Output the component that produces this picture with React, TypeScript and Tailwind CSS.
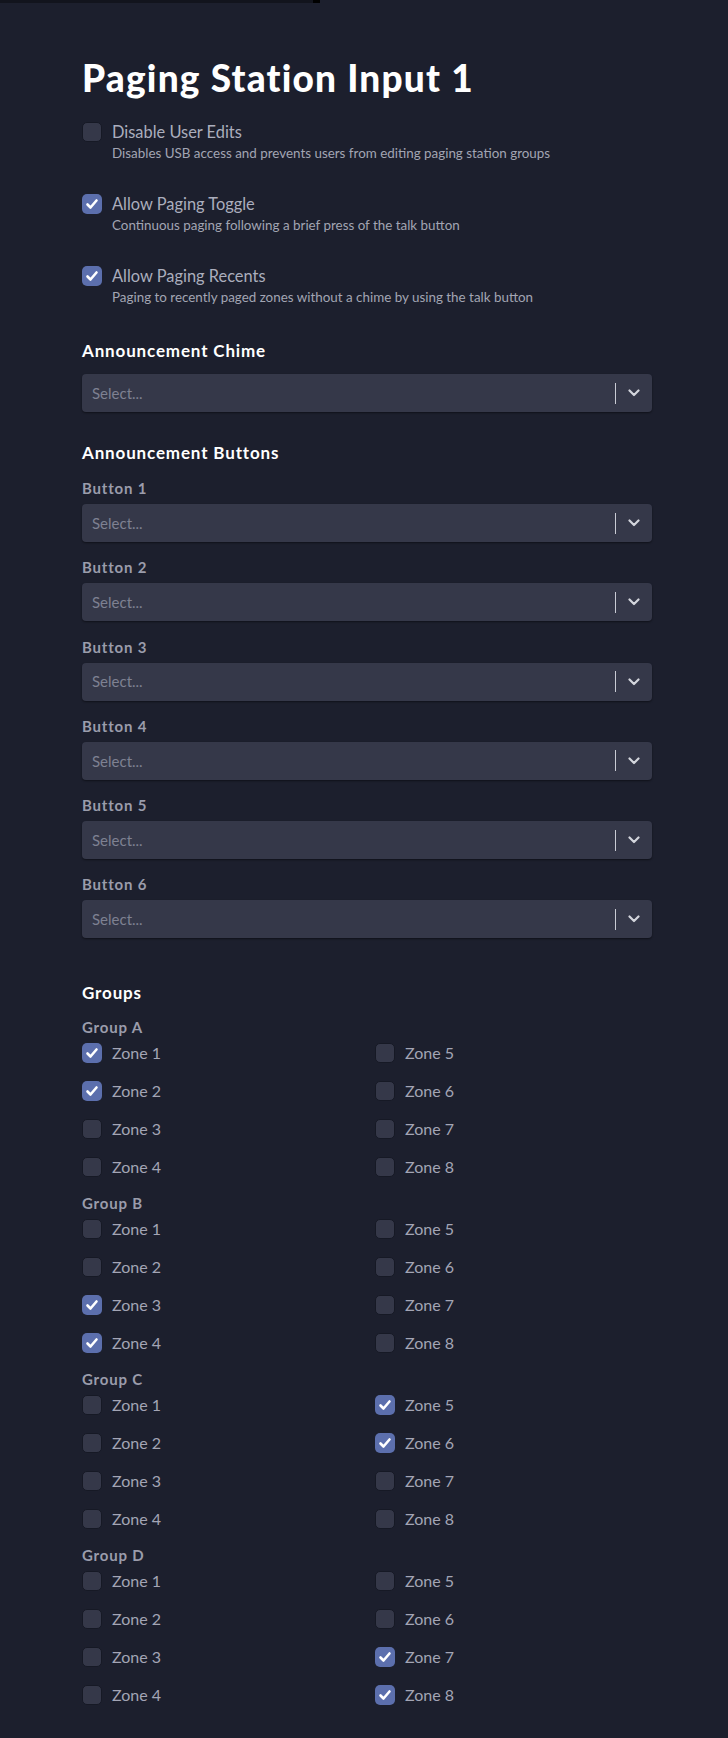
import React from "react";

const Check = () => (
  <svg viewBox="0 0 20 20" className="w-5 h-5">
    <path d="M5.5 10.5 L8.5 13.5 L14.5 6.5" stroke="white" strokeWidth="2.6" fill="none" strokeLinecap="round" strokeLinejoin="round" />
  </svg>
);

function Box({ checked }: { checked: boolean }) {
  return checked ? (
    <div className="w-5 h-5 shrink-0 rounded-[5px] bg-[#5c6fad] flex items-center justify-center">
      <Check />
    </div>
  ) : (
    <div className="w-5 h-5 shrink-0 rounded-[5px] bg-[#353849] border border-[#161925]" />
  );
}

function Select() {
  return (
    <div className="h-[38px] rounded-[4px] bg-[#353849] shadow-[0_1px_2px_rgba(0,0,0,0.45)] flex items-center">
      <div className="flex-1 pl-[10px] text-[15px] text-[#7e8192]">Select...</div>
      <div className="w-px h-[21px] bg-[#c9cbd4]" />
      <div className="w-9 h-full flex items-center justify-center">
        <svg viewBox="0 0 12 8" className="w-[12px] h-[8px]">
          <path d="M1.5 1.5 L6 6 L10.5 1.5" stroke="#d3d5dc" strokeWidth="2.2" fill="none" strokeLinecap="round" strokeLinejoin="round" />
        </svg>
      </div>
    </div>
  );
}

const options = [
  { label: "Disable User Edits", desc: "Disables USB access and prevents users from editing paging station groups", checked: false },
  { label: "Allow Paging Toggle", desc: "Continuous paging following a brief press of the talk button", checked: true },
  { label: "Allow Paging Recents", desc: "Paging to recently paged zones without a chime by using the talk button", checked: true },
];

const groups = [
  { name: "Group A", checked: [1, 2] },
  { name: "Group B", checked: [3, 4] },
  { name: "Group C", checked: [5, 6] },
  { name: "Group D", checked: [7, 8] },
];

export default function App() {
  return (
    <div className="min-h-screen bg-[#1c1f2d] font-['Lato',sans-serif]">
      <div className="flex">
        <div className="h-[3px] w-[313px] bg-[#12141d]" />
        <div className="h-[3px] w-[7px] bg-black" />
      </div>
      <div className="pl-[82px] w-[652px] pt-[53px] pb-[34px]">
        <h1 className="text-[37px] leading-[44px] font-black tracking-[1.2px] text-white">Paging Station Input 1</h1>

        <div className="mt-[22px] flex flex-col gap-[31px]">
          {options.map((o) => (
            <div key={o.label} className="flex gap-[10px]">
              <Box checked={o.checked} />
              <div>
                <div className="text-[16.4px] leading-[20px] text-[#abaebd]">{o.label}</div>
                <div className="mt-px text-[13.4px] leading-[20px] text-[#a2a5b3]">{o.desc}</div>
              </div>
            </div>
          ))}
        </div>

        <h2 className="mt-[32px] text-[17px] leading-[24px] font-bold tracking-[0.85px] text-white">Announcement Chime</h2>
        <div className="mt-[11px]">
          <Select />
        </div>

        <h2 className="mt-[29px] text-[17px] leading-[24px] font-bold tracking-[0.85px] text-white">Announcement Buttons</h2>
        <div className="mt-[13px] flex flex-col gap-[15.3px]">
          {[1, 2, 3, 4, 5, 6].map((n) => (
            <div key={n}>
              <div className="text-[15px] leading-[20px] font-bold tracking-[0.8px] text-[#9a9cab]">Button {n}</div>
              <div className="mt-[6px]">
                <Select />
              </div>
            </div>
          ))}
        </div>

        <h2 className="mt-[43px] text-[17px] leading-[24px] font-bold tracking-[0.85px] text-white">Groups</h2>
        <div className="mt-[12px] flex flex-col gap-[16px]">
          {groups.map((g) => (
            <div key={g.name}>
              <div className="text-[15px] leading-[20px] font-bold tracking-[0.8px] text-[#9a9cab]">{g.name}</div>
              <div className="mt-[6px] grid grid-cols-2 grid-rows-4 grid-flow-col gap-x-4 gap-y-[18px]">
                {[1, 2, 3, 4, 5, 6, 7, 8].map((z) => (
                  <div key={z} className="flex items-center gap-[10px]">
                    <Box checked={g.checked.includes(z)} />
                    <span className="text-[16px] leading-[20px] text-[#a3a5b5]">Zone {z}</span>
                  </div>
                ))}
              </div>
            </div>
          ))}
        </div>
      </div>
    </div>
  );
}
